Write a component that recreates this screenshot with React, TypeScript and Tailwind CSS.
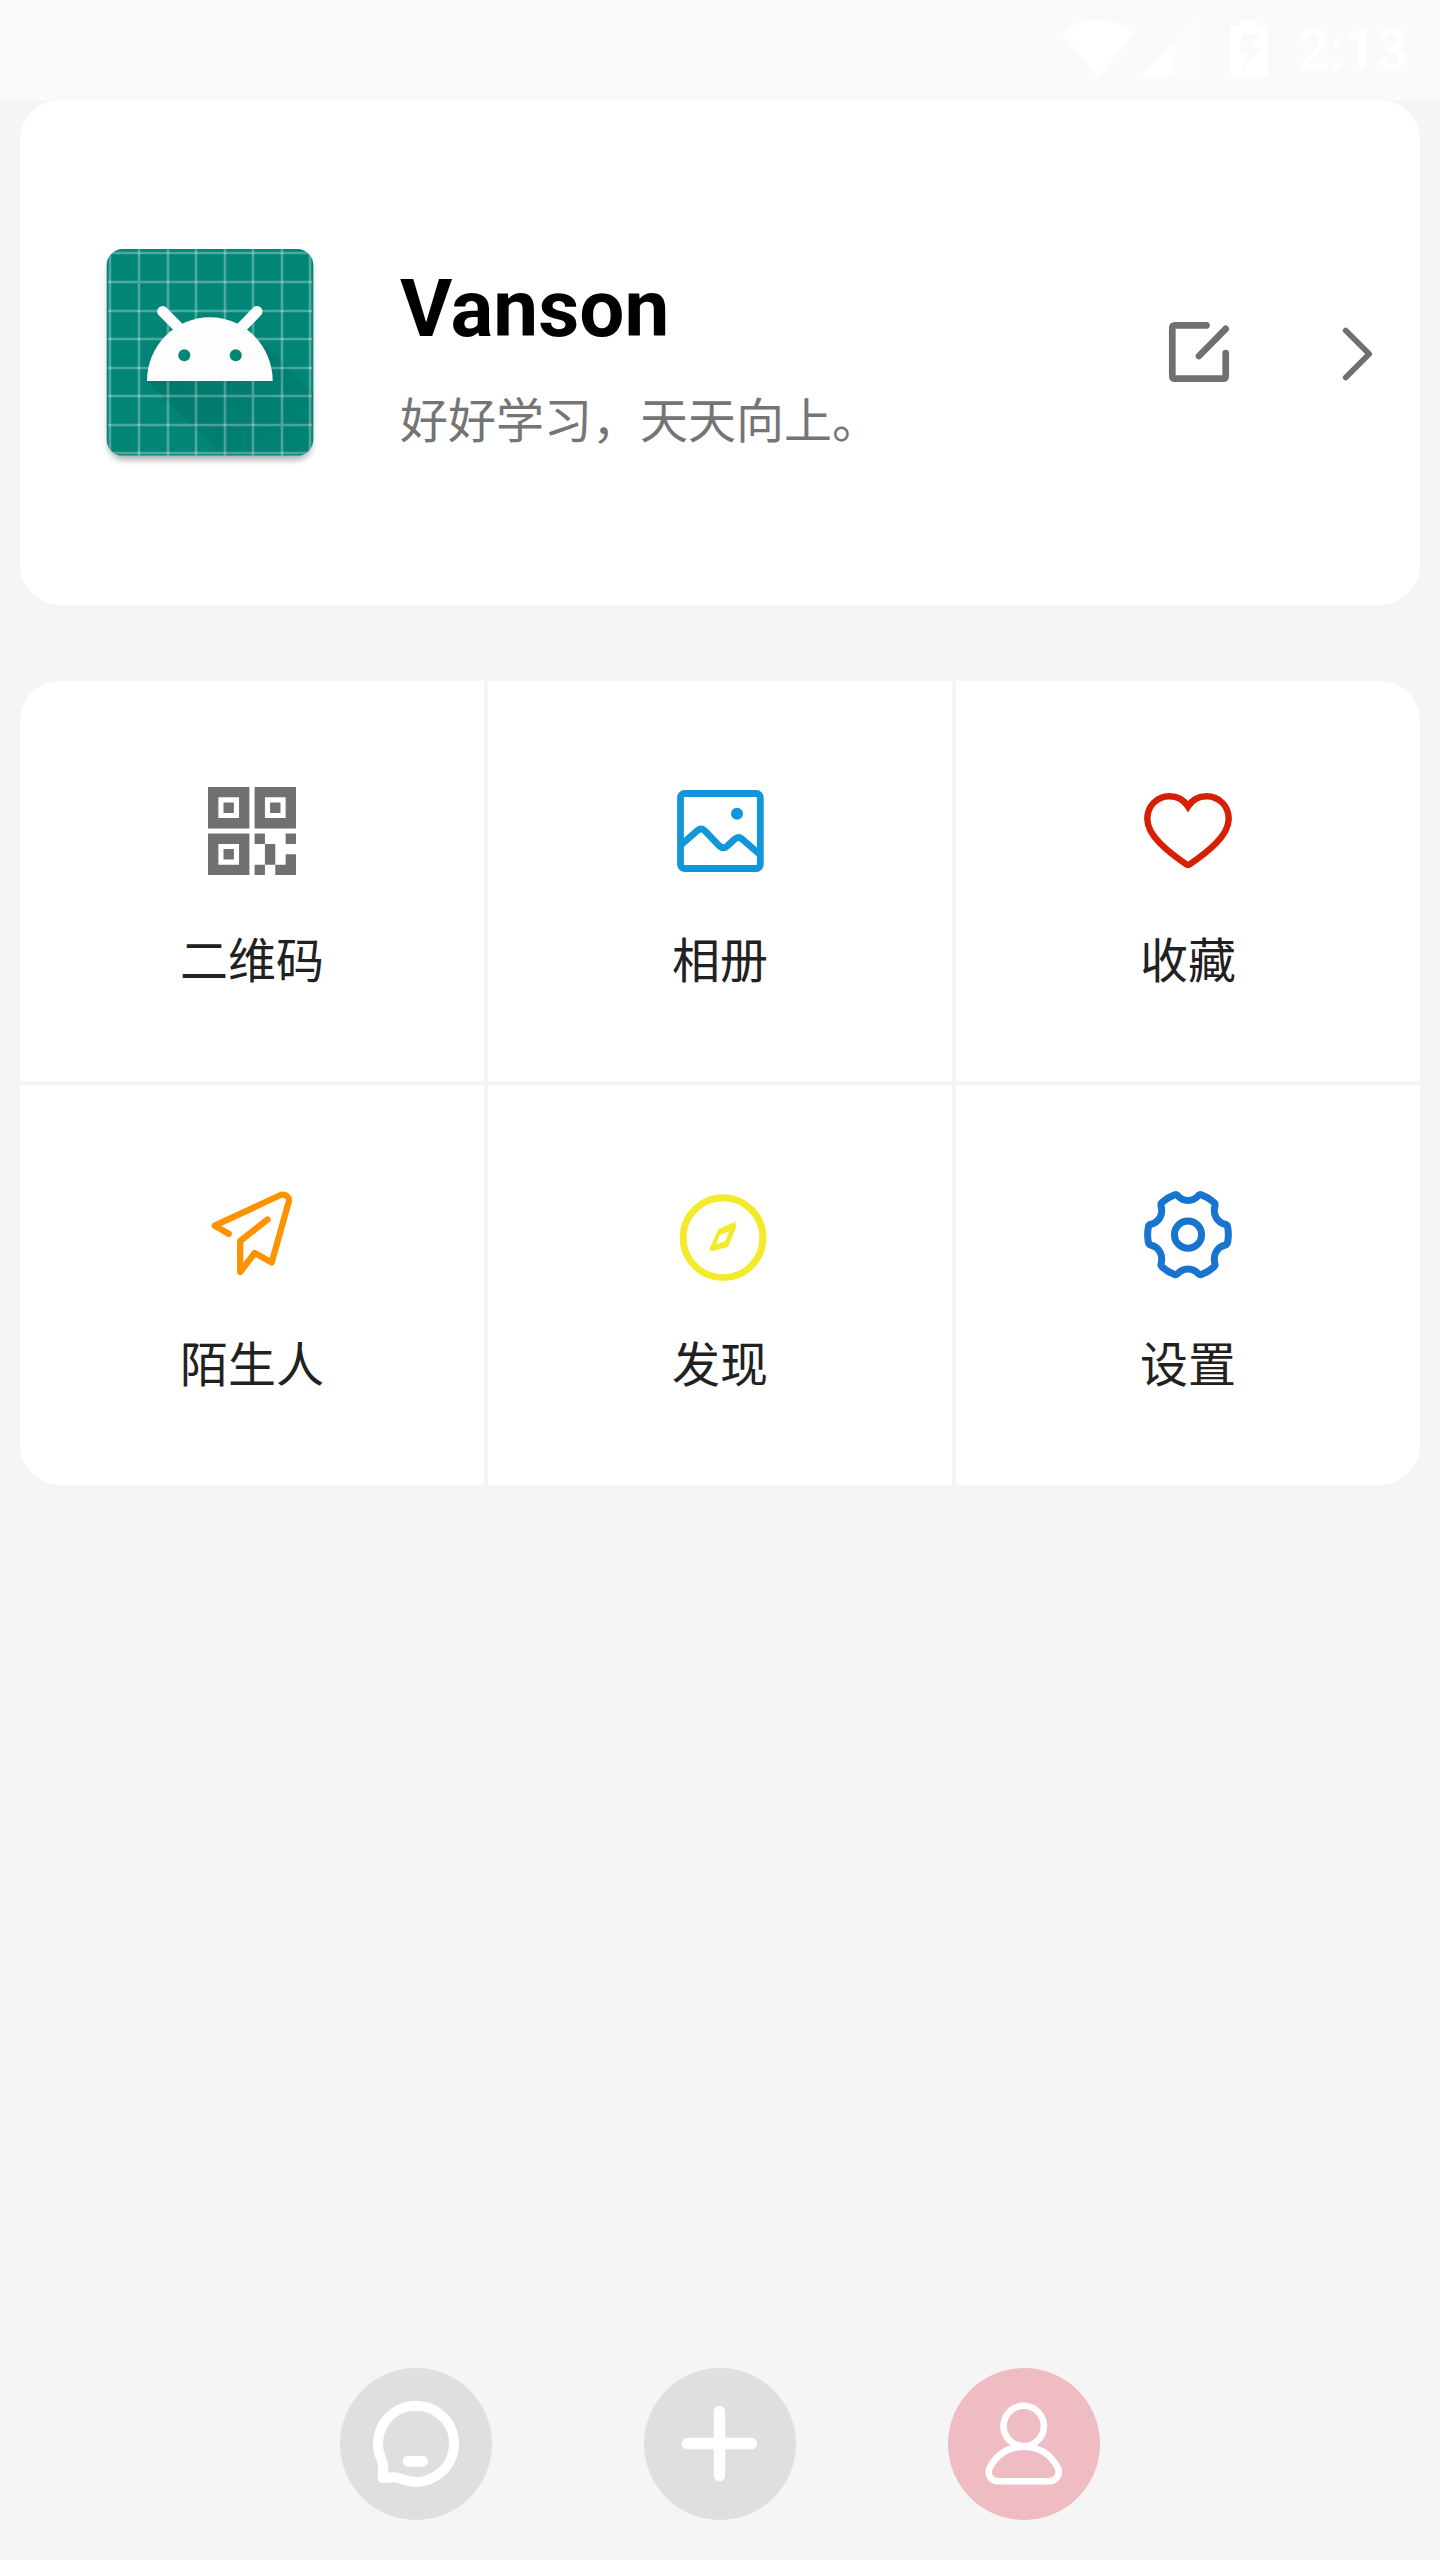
import type { ReactNode } from "react";

const gridLines = [20, 49, 78, 106, 135, 163, 192, 220];

function StatusBar() {
  return (
    <header className="flex h-[100px] items-center justify-end bg-[#fafafa] pr-8 text-white">
      <svg className="mr-1.5 h-[60px] w-[72px]" viewBox="0 0 72 60" fill="currentColor" role="img" aria-label="Wi-Fi">
        <path d="M36 57 L0 13 Q15 0 36 0 T72 13 Z" />
      </svg>
      <svg className="mr-[34px] h-[60px] w-14" viewBox="0 0 56 60" fill="currentColor" role="img" aria-label="Signal">
        <path d="M0 57 L56 1 V57 Z" opacity=".4" />
        <path d="M0 57 L34 23 V57 Z" />
      </svg>
      <svg className="mr-[30px] h-[60px] w-[38px]" viewBox="0 0 38 60" fill="currentColor" role="img" aria-label="Charging">
        <path
          fillRule="evenodd"
          d="M10 0 H28 V6 H36 Q38 6 38 8 V55 Q38 57 36 57 H2 Q0 57 0 55 V8 Q0 6 2 6 H10 Z M13 14 L9 32 H17 L11 51 L32 28 H22 L30 14 Z"
        />
      </svg>
      <time className="font-[Roboto,sans-serif] text-[56px] leading-[64px] font-medium">2:13</time>
    </header>
  );
}

function Avatar() {
  return (
    <svg className="size-60 shrink-0" viewBox="0 0 240 240" role="img" aria-label="Avatar">
      <defs>
        <filter id="drop" x="-20%" y="-20%" width="140%" height="140%">
          <feGaussianBlur stdDeviation="3" />
        </filter>
        <linearGradient id="cast" x1="0" y1="0" x2="1" y2="1">
          <stop offset="0.200" stopColor="#000" stopOpacity=".09" />
          <stop offset="1" stopColor="#000" stopOpacity="0.010" />
        </linearGradient>
        <clipPath id="tile">
          <rect x="16.700" y="16" width="206.600" height="206.600" rx="16" />
        </clipPath>
      </defs>
      <rect x="18" y="22" width="204" height="205" rx="16" fill="#000" opacity=".3" filter="url(#drop)" />
      <g clipPath="url(#tile)">
        <rect width="240" height="240" fill="#008577" />
        <g stroke="#fff" strokeOpacity=".3" strokeWidth="2.600">
          {gridLines.map((p) => (
            <path key={p} d={`M${p} 16 V224 M18 ${p} H222`} />
          ))}
        </g>
        <path d="M57 148 L134 225 H226 V162 L176 112 L120 148 Z" fill="url(#cast)" />
      </g>
      <path d="M57 148 C57 113 85 84.300 119.900 84.300 S182.700 113 182.700 148 Z" fill="#fdfdfd" />
      <path d="M72.700 78.500 L92 98 M167 78.500 L148 98" stroke="#fdfdfd" strokeWidth="11" strokeLinecap="round" />
      <circle cx="94.300" cy="122.300" r="6" fill="#008577" />
      <circle cx="145.700" cy="122.300" r="6" fill="#008577" />
    </svg>
  );
}

function ProfileCard() {
  return (
    <section className="mx-5 flex h-[505px] items-center rounded-[40px] bg-white pr-5 pl-[70px]">
      <Avatar />
      <div className="ml-[70px] flex min-w-0 flex-1 flex-col gap-6 pt-2">
        <h1 className="font-[Roboto,sans-serif] text-[80px] leading-[96px] font-bold text-black">Vanson</h1>
        <p className="text-[48px] leading-[72px] text-[#757575]">好好学习，天天向上。</p>
      </div>
      <div className="flex gap-20 text-[#707070]">
        <button type="button" aria-label="编辑">
          <svg className="size-20" viewBox="0 0 80 80" fill="none" stroke="currentColor" strokeWidth="6.700" strokeLinecap="round" strokeLinejoin="round">
            <path d="M46.500 12.300 H15 Q12.300 12.300 12.300 15 V63 Q12.300 65.700 15 65.700 H63 Q65.700 65.700 65.700 63 V40 M39 43 L65.700 15.800" />
          </svg>
        </button>
        <button type="button" aria-label="查看资料">
          <svg className="size-20" viewBox="0 0 80 80" fill="none" stroke="currentColor" strokeWidth="5.700" strokeLinecap="round" strokeLinejoin="round">
            <path d="M25.700 17.500 L49.200 41 L25.700 64.500" />
          </svg>
        </button>
      </div>
    </section>
  );
}

function QrIcon() {
  return (
    <g transform="translate(4 4) scale(10.350)" fill="#707070">
      <path
        fillRule="evenodd"
        d="M0 0H4V4H0ZM1 1V3H3V1ZM1.500 1.500H2.500V2.500H1.500ZM4.500 0H8.500V4H4.500ZM5.500 1V3H7.500V1ZM6 1.500H7V2.500H6ZM0 4.500H4V8.500H0ZM1 5.500V7.500H3V5.500ZM1.500 6H2.500V7H1.500Z"
      />
      <path d="M4.500 4.500H5.500V5.500H4.500ZM7.500 4.500H8.500V5.500H7.500ZM5.500 5.500H6.500V7.500H5.500ZM4.500 7.500H5.500V8.500H4.500ZM7.500 6.500H8.500V8.500H6.500V7.500H7.500Z" />
    </g>
  );
}

function AlbumIcon() {
  return (
    <g fill="none" stroke="#1296db" strokeWidth="6.800">
      <rect x="8.500" y="10.500" width="79.800" height="75" rx="4" />
      <path d="M9.500 61.500 L25.500 47.500 Q29 44.500 32.500 47.500 L47.500 63 Q51.300 66.500 55 63.300 L62.500 56.300 Q66.300 53 70 56 L87 70.800" />
      <circle cx="65" cy="30.800" r="6" fill="#1296db" stroke="none" />
    </g>
  );
}

function HeartIcon() {
  return (
    <path
      d="M48 23.500 C44 17 37.500 13.200 29.500 13.200 C16.500 13.200 7.300 23.500 7.300 36 C7.300 53 29 69.500 46 81.200 Q48 82.700 50 81.200 C67 69.500 88.700 53 88.700 36 C88.700 23.500 79.500 13.200 66.500 13.200 C58.500 13.200 52 17 48 23.500 Z"
      fill="none"
      stroke="#d81e06"
      strokeWidth="6.400"
    />
  );
}

function PlaneIcon() {
  return (
    <path
      d="M24.700 46.800 L10.700 38.700 L75.500 8.500 C80.500 6 86 9.500 84.700 15 L67.700 75.500 L50.700 66 L36.200 85 V54 L63.500 32.500"
      fill="none"
      stroke="#ff9200"
      strokeWidth="6.300"
      strokeLinecap="round"
      strokeLinejoin="round"
    />
  );
}

function CompassIcon() {
  return (
    <>
      <circle cx="51" cy="50.700" r="39.900" fill="none" stroke="#f4ea2a" strokeWidth="6.900" />
      <path
        fillRule="evenodd"
        fill="#f4ea2a"
        d="M46.500 42 L65.200 34 L62.500 36.500 Q65 38 63.800 41 L56 60 L40.500 64 Q37 64.500 37.800 61 Z M48 48 L44 57.500 L53.300 54 L57.300 44.200 Z"
      />
    </>
  );
}

function GearIcon() {
  return (
    <g fill="none" stroke="#1875cf" strokeWidth="7" strokeLinejoin="round">
      <path d="M37.500 8.500 C40.500 12 44 13.500 48 13.500 C52 13.500 55.500 12 58.500 8.500 Q59.800 7.200 61.500 7.900 C66 9.500 70.500 12.300 74 15.500 Q75.500 16.800 75 18.500 C73.800 23 74 27 76 30.500 C78 34 81.500 36.500 85.500 37.400 Q87.200 38 87.600 39.800 C88.600 45 88.600 50.400 87.600 55.600 Q87.200 57.400 85.500 58 C81.500 58.900 78 61.400 76 64.900 C74 68.400 73.800 72.400 75 76.900 Q75.500 78.600 74 79.900 C70.500 83.100 66 85.900 61.500 87.500 Q59.800 88.200 58.500 86.900 C55.500 83.400 52 81.900 48 81.900 C44 81.900 40.500 83.400 37.500 86.900 Q36.200 88.200 34.500 87.500 C30 85.900 25.500 83.100 22 79.900 Q20.500 78.600 21 76.900 C22.200 72.400 22 68.400 20 64.900 C18 61.400 14.500 58.900 10.500 58 Q8.800 57.400 8.400 55.600 C7.400 50.400 7.400 45 8.400 39.800 Q8.800 38 10.500 37.400 C14.500 36.500 18 34 20 30.500 C22 27 22.200 23 21 18.500 Q20.500 16.800 22 15.500 C25.500 12.300 30 9.500 34.500 7.900 Q36.200 7.200 37.500 8.500 Z" />
      <circle cx="48" cy="47.700" r="13.600" />
    </g>
  );
}

const tiles: { label: string; icon: ReactNode }[] = [
  { label: "二维码", icon: <QrIcon /> },
  { label: "相册", icon: <AlbumIcon /> },
  { label: "收藏", icon: <HeartIcon /> },
  { label: "陌生人", icon: <PlaneIcon /> },
  { label: "发现", icon: <CompassIcon /> },
  { label: "设置", icon: <GearIcon /> },
];

function TileGrid() {
  return (
    <section className="mx-5 mt-[76px] grid grid-cols-3 gap-1 overflow-hidden rounded-[40px]">
      {tiles.map((tile) => (
        <button
          key={tile.label}
          type="button"
          className="flex h-[400px] flex-col items-center gap-[42px] bg-white pt-[102px] text-[48px] leading-[72px] text-[#212121]"
        >
          <svg className="size-24 shrink-0" viewBox="0 0 96 96" aria-hidden="true">
            {tile.icon}
          </svg>
          {tile.label}
        </button>
      ))}
    </section>
  );
}

function BottomNav() {
  return (
    <nav className="mt-auto flex justify-center gap-[152px] pb-10">
      <button type="button" aria-label="消息" className="size-[152px] rounded-full bg-[#dee0df]">
        <svg viewBox="0 0 152 152" fill="none" stroke="#fff" strokeWidth="10" strokeLinejoin="round">
          <path d="M61.500 110.800 A38 38 0 1 0 41.500 91.500 C43.800 96 43.300 99 43 103 L42.700 110 L50 109.500 C56 109 57.500 109.300 61.500 110.800 Z" />
          <path d="M68 93.300 H82.700" strokeWidth="10.800" strokeLinecap="round" />
        </svg>
      </button>
      <button type="button" aria-label="添加" className="size-[152px] rounded-full bg-[#dee0df]">
        <svg viewBox="0 0 152 152" fill="none" stroke="#fff" strokeWidth="11.400" strokeLinecap="round">
          <path d="M43.500 75.500 H107.500 M75.500 43.500 V107.500" />
        </svg>
      </button>
      <button type="button" aria-label="我的" aria-current="page" className="size-[152px] rounded-full bg-[#f0bcc4]">
        <svg viewBox="0 0 152 152" fill="none" stroke="#fff" strokeWidth="6.600">
          <circle cx="75.700" cy="58" r="20.200" />
          <path d="M75.700 78.700 C60 78.700 48.500 87 41.800 99.500 C38.500 106 43 113.300 50 113.300 H101.400 C108.400 113.300 113 106 109.600 99.500 C103 87 91.500 78.700 75.700 78.700 Z" />
        </svg>
      </button>
    </nav>
  );
}

export default function App() {
  return (
    <div className="flex min-h-screen flex-col bg-[#f5f5f5] font-['Noto_Sans_CJK_SC',sans-serif]">
      <StatusBar />
      <main>
        <ProfileCard />
        <TileGrid />
      </main>
      <BottomNav />
    </div>
  );
}
